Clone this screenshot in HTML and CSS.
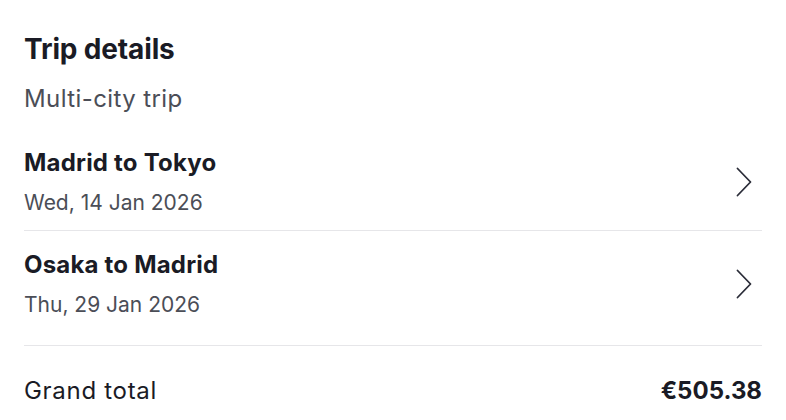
FILE: index.html
```html
<!DOCTYPE html>
<html>
<head>
<meta charset="utf-8">
<link rel="stylesheet" href="styles.css">
</head>
<body>
<div class="card">
  <h1 class="title">Trip details</h1>
  <div class="subtitle">Multi-city trip</div>
  <div class="legs">
    <div class="leg">
      <div class="leg-text">
        <div class="leg-name">Madrid to Tokyo</div>
        <div class="leg-date">Wed, 14 Jan 2026</div>
      </div>
      <svg class="chev" width="16" height="30" viewBox="0 0 16 30"><path d="M1.5 1.5 L14.5 15 L1.5 28.5" fill="none" stroke="#2a2c38" stroke-width="1.8" stroke-linecap="round" stroke-linejoin="round"/></svg>
    </div>
    <div class="leg">
      <div class="leg-text">
        <div class="leg-name">Osaka to Madrid</div>
        <div class="leg-date">Thu, 29 Jan 2026</div>
      </div>
      <svg class="chev" width="16" height="30" viewBox="0 0 16 30"><path d="M1.5 1.5 L14.5 15 L1.5 28.5" fill="none" stroke="#2a2c38" stroke-width="1.8" stroke-linecap="round" stroke-linejoin="round"/></svg>
    </div>
  </div>
  <div class="total">
    <span class="total-label">Grand total</span>
    <span class="total-value">€505.38</span>
  </div>
</div>
</body>
</html>
```
FILE: styles.css
```css
html, body {
  margin: 0;
  padding: 0;
  background: #ffffff;
}
body {
  font-family: Inter, "Noto Sans", sans-serif;
  color: #1a1b25;
}
.card {
  padding: 31px 24px 0 24px;
}
.title {
  margin: 0;
  font-size: 28px;
  line-height: 36px;
  font-weight: 700;
  letter-spacing: -0.15px;
}
.subtitle {
  margin-top: 16px;
  font-size: 24px;
  line-height: 32px;
  letter-spacing: 0.4px;
  color: #4b4e57;
}
.legs {
  margin-top: 14px;
  padding-bottom: 13px;
  border-bottom: 1px solid #e6e6e9;
}
.leg {
  display: flex;
  align-items: center;
  justify-content: space-between;
  padding: 18px 10px 13px 0;
}
.leg + .leg {
  border-top: 1px solid #e6e6e9;
}
.leg-name {
  font-size: 24px;
  line-height: 32px;
  font-weight: 700;
  letter-spacing: 0.2px;
}
.leg-date {
  margin-top: 10px;
  font-size: 21px;
  line-height: 28px;
  color: #4b4e57;
}
.chev {
  display: block;
}
.total {
  display: flex;
  justify-content: space-between;
  align-items: baseline;
  padding-top: 29px;
  font-size: 24px;
  line-height: 32px;
}
.total-label {
  letter-spacing: 0.7px;
}
.total-value {
  font-weight: 700;
}
```
